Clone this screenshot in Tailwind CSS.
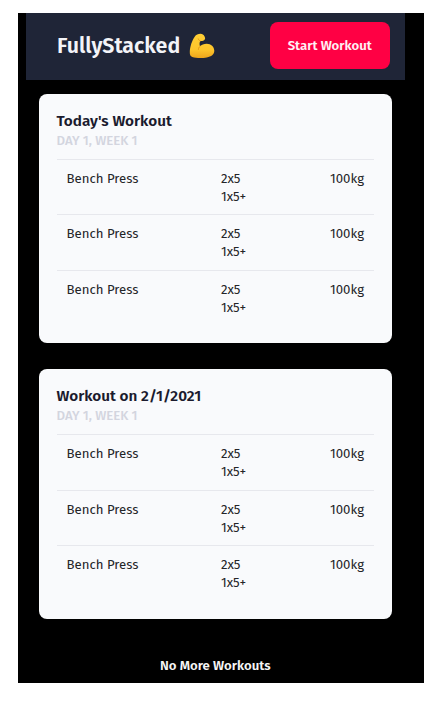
<!DOCTYPE html>
<html lang="en">
<head>
<meta charset="utf-8">
<title>FullyStacked</title>
<script src="https://cdn.jsdelivr.net/npm/@tailwindcss/browser@4"></script>
</head>
<body class="bg-white font-['Fira_Sans','Noto_Sans',sans-serif] h-[702px] overflow-hidden pt-[13px] pl-[18px]">
<div class="w-[406px] h-[670px] bg-black pl-[8px] flex flex-col">
  <header class="w-[378.5px] h-[67px] shrink-0 bg-[#1f2537] flex items-center justify-between pl-[31px] pr-[14.5px]">
    <div class="flex items-center gap-[6.500px] -mt-[2px]">
      <h1 class="text-[21.400px] leading-[28px] font-semibold text-[#f3f4f8] whitespace-nowrap w-[125px]">FullyStacked</h1>
      <svg class="w-[26px] h-[26px]" viewBox="0 0 26 26">
        <defs><linearGradient id="skin" x1="0" y1="0" x2="0" y2="1"><stop offset="0" stop-color="#ffcf35"/><stop offset=".65" stop-color="#fdc52b"/><stop offset="1" stop-color="#eda51c"/></linearGradient></defs>
        <path fill="url(#skin)" d="M8.2 1.600c1.700-.9 4.400-1 5.700-.2 1.300.9 2.500 2.900 2.200 4.300-.2 1.200-1.600 2.200-3 2.300-.8.100-1.400-.2-1.900-.1-.8 1.400-.8 3.600-.2 5.400 1.500-1.500 4-2.600 6.700-2.600 4.300 0 7.600 3.100 7.600 7.100 0 3.600-3 5.900-7.500 6.600-5 .8-10.700.7-14.500-.5C1.300 23.200.7 21.800.8 19 .9 13.800 3 7.500 5.700 3.700 6.400 2.700 7.200 2.100 8.200 1.600z"/>
        <path fill="none" stroke="#e59a18" stroke-width="1" stroke-linecap="round" d="M11.200 7.900c-1.100-.4-1.700-1.200-1.900-2M11 13.300c-1.200 1-1.600 2-1.600 3.100"/>
      </svg>
    </div>
    <button class="w-[120.500px] h-[46.500px] -mt-[2px] rounded-[8px] bg-[#ff0044] text-[#fff0f4] text-[13.200px] font-semibold whitespace-nowrap">Start Workout</button>
  </header>
  <main id="list" class="w-[378.5px] px-[13px] pt-[13.500px] flex flex-col gap-[26px]"></main>
  <footer class="w-[378.5px] mt-[37.500px] text-center text-[13.200px] leading-[20px] font-semibold text-[#f5f5f5]">No More Workouts</footer>
</div>
<script>
const row = `<div class="h-[55.600px] border-t-[1.500px] border-[#e7e8ed] pt-[10px] pl-[10px] pr-[10px] flex text-[13.200px] leading-[18px] text-[#242528]">
  <div class="w-[154.500px]">Bench Press</div>
  <div class="flex-1">2x5<br>1x5+</div>
  <div>100kg</div>
</div>`;
document.getElementById('list').innerHTML = ["Today's Workout", 'Workout on 2/1/2021'].map(title => `
<section class="h-[249.500px] rounded-[8px] bg-[#f9fafc] pt-[17.300px] pl-[17.500px] pr-[17.500px]">
  <h2 class="text-[15.300px] leading-[20px] font-semibold text-[#1b1b2e] whitespace-nowrap">${title}</h2>
  <p class="text-[13.200px] leading-[20px] font-medium text-[#d3d5df] mb-[8px]">DAY 1, WEEK 1</p>
  ${row.repeat(3)}
</section>`).join('');
</script>
</body>
</html>
